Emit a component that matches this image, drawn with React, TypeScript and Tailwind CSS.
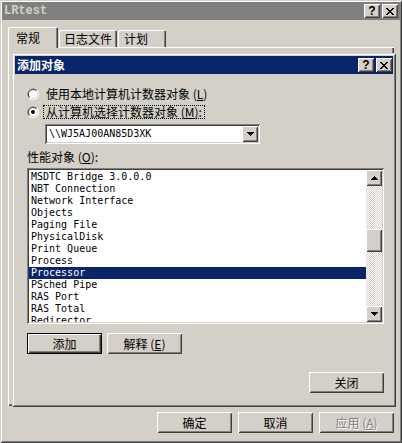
import React from 'react';

const cjk = "font-['Noto_Sans_CJK_SC','Noto_Sans',sans-serif]";
const mono = "font-['DejaVu_Sans_Mono',monospace]";
const raised = 'shadow-[inset_1px_1px_0_#fff,inset_-1px_-1px_0_#404040,inset_2px_2px_0_#d4d0c8,inset_-2px_-2px_0_#808080]';
const sunken = 'shadow-[inset_1px_1px_0_#808080,inset_-1px_-1px_0_#fff,inset_2px_2px_0_#404040,inset_-2px_-2px_0_#d4d0c8]';

const CloseGlyph = () => (
  <svg width="8" height="7" viewBox="0 0 8 7" shapeRendering="crispEdges">
    <path
      d="M0 0h2v1H0zM6 0h2v1H6zM1 1h2v1H1zM5 1h2v1H5zM2 2h4v1H2zM3 3h2v1H3zM2 4h4v1H2zM1 5h2v1H1zM5 5h2v1H5zM0 6h2v1H0zM6 6h2v1H6z"
      fill="#000"
    />
  </svg>
);

const Arrow = ({ up }: { up?: boolean }) => (
  <svg width="7" height="4" viewBox="0 0 7 4" shapeRendering="crispEdges">
    <path
      d={up ? 'M3 0h1v1H3zM2 1h3v1H2zM1 2h5v1H1zM0 3h7v1H0z' : 'M0 0h7v1H0zM1 1h5v1H1zM2 2h3v1H2zM3 3h1v1H3z'}
      fill="#000"
    />
  </svg>
);

const CaptionButtons = () => (
  <div className="ml-auto flex gap-[2px]">
    <div className={`w-[16px] h-[14px] bg-[#d4d0c8] ${raised} flex items-center justify-center`}>
      <span className="font-['Liberation_Sans',sans-serif] font-bold text-[12px] leading-none text-black">?</span>
    </div>
    <div className={`w-[16px] h-[14px] bg-[#d4d0c8] ${raised} flex items-center justify-center`}>
      <CloseGlyph />
    </div>
  </div>
);

const Radio = ({ checked }: { checked?: boolean }) => (
  <svg width="12" height="12" viewBox="0 0 12 12" className="shrink-0">
    <circle cx="6" cy="6" r="6" fill="#fff" />
    <path d="M1.76 10.24A6 6 0 0 1 10.24 1.76L6 6z" fill="#808080" />
    <circle cx="6" cy="6" r="5" fill="#d4d0c8" />
    <path d="M2.46 9.54A5 5 0 0 1 9.54 2.46L6 6z" fill="#404040" />
    <circle cx="6" cy="6" r="4" fill="#fff" />
    {checked && <circle cx="6" cy="6" r="2" fill="#000" />}
  </svg>
);

const Button = ({ children, isDefault, disabled }: { children: React.ReactNode; isDefault?: boolean; disabled?: boolean }) => (
  <div
    className={`w-[75px] h-[21px] bg-[#d4d0c8] flex items-center justify-center text-[12px] leading-none ${
      isDefault
        ? 'border border-black shadow-[inset_1px_1px_0_#fff,inset_-1px_-1px_0_#404040,inset_-2px_-2px_0_#808080]'
        : raised
    } ${disabled ? 'text-[#808080] [text-shadow:1px_1px_0_#fff]' : 'text-black'}`}
  >
    {children}
  </div>
);

const objects = [
  'MSDTC Bridge 3.0.0.0',
  'NBT Connection',
  'Network Interface',
  'Objects',
  'Paging File',
  'PhysicalDisk',
  'Print Queue',
  'Process',
  'Processor',
  'PSched Pipe',
  'RAS Port',
  'RAS Total',
  'Redirector',
];

export default function App() {
  return (
    <div
      className={`w-[402px] h-[443px] bg-[#d4d0c8] flex flex-col p-[2px] overflow-hidden ${cjk} text-[12px] text-black shadow-[inset_1px_1px_0_#d4d0c8,inset_-1px_-1px_0_#404040,inset_2px_2px_0_#fff,inset_-2px_-2px_0_#808080]`}
    >
      {/* outer caption */}
      <div className="h-[18px] bg-[#808080] flex items-center pl-[2px] pr-[2px] shrink-0">
        <span className="font-['Liberation_Mono',monospace] font-bold text-[12px] leading-none text-[#d4d0c8]">LRtest</span>
        <CaptionButtons />
      </div>

      {/* tabs */}
      <div className="mt-[7px] h-[20px] pl-[6px] flex items-start shrink-0">
        <div className="relative z-10 w-[50px] h-[21px] bg-[#d4d0c8] rounded-t-[2px] shadow-[inset_1px_1px_0_#fff,inset_-1px_0_0_#404040,inset_-2px_0_0_#808080] flex items-start pl-[8px] pt-[4px] leading-[14px]">
          常规
        </div>
        <div className="mt-[3px] ml-[1px] w-[58px] h-[17px] rounded-t-[2px] shadow-[inset_1px_1px_0_#fff,inset_-1px_0_0_#404040,inset_-2px_0_0_#808080] flex items-start justify-center pt-[2px] leading-[14px]">
          日志文件
        </div>
        <div className="mt-[3px] ml-[1px] w-[48px] h-[17px] rounded-t-[2px] shadow-[inset_1px_1px_0_#fff,inset_-1px_0_0_#404040,inset_-2px_0_0_#808080] flex items-start pl-[6px] pt-[2px] leading-[14px]">
          计划
        </div>
      </div>

      {/* tab panel */}
      <div className="relative ml-[6px] w-[386px] h-[359px] shrink-0 shadow-[inset_1px_1px_0_#fff,inset_-1px_-1px_0_#404040,inset_-2px_-2px_0_#808080]">
        {/* 添加对象 dialog window */}
        <div className="absolute left-[4px] top-[6px] w-[384px] h-[354px] bg-[#d4d0c8] p-[3px] flex flex-col shadow-[inset_1px_1px_0_#d4d0c8,inset_-1px_-1px_0_#404040,inset_2px_2px_0_#fff,inset_-2px_-2px_0_#808080]">
          <div className="h-[18px] bg-[#0a246a] flex items-center pl-[2px] pr-[1px] shrink-0">
            <span className="font-bold text-white text-[12px] leading-none">添加对象</span>
            <CaptionButtons />
          </div>

          <div className="flex-1 flex flex-col pl-[12px] pr-[9px]">
            <div className="mt-[11px] h-[18px] flex items-center">
              <Radio />
              <span className="ml-[4px] h-[14px] px-[2px] border border-transparent flex items-center leading-none">
                使用本地计算机计数器对象 (<span className="underline">L</span>)
              </span>
            </div>
            <div className="h-[18px] flex items-center">
              <Radio checked />
              <span className="ml-[4px] h-[14px] px-[2px] border border-dotted border-black flex items-center leading-none">
                从计算机选择计数器对象 (<span className="underline">M</span>):
              </span>
            </div>

            {/* machine combo */}
            <div className={`mt-[3px] ml-[18px] w-[215px] h-[20px] bg-white ${sunken} p-[2px] flex`}>
              <div className={`flex-1 pl-[2px] flex items-center ${mono} text-[10px] leading-none`}>
                {'\\\\WJ5AJ00AN85D3XK'}
              </div>
              <div className={`w-[16px] h-[16px] bg-[#d4d0c8] ${raised} flex items-center justify-center`}>
                <Arrow />
              </div>
            </div>

            <div className="mt-[5px] h-[16px] flex items-center leading-none">
              性能对象 (<span className="underline">O</span>):
            </div>

            {/* performance objects list */}
            <div className={`mt-[3px] h-[156px] bg-white ${sunken} p-[2px] flex`}>
              <div className={`flex-1 overflow-hidden pt-[1px] ${mono} text-[10px]`}>
                {objects.map((o) => (
                  <div
                    key={o}
                    className={`h-[12px] leading-[12px] pl-[2px] whitespace-pre ${
                      o === 'Processor' ? 'bg-[#0a246a] text-white' : 'text-black'
                    }`}
                  >
                    {o}
                  </div>
                ))}
              </div>
              <div className="w-[16px] flex flex-col">
                <div className={`h-[16px] bg-[#d4d0c8] ${raised} flex items-center justify-center`}>
                  <Arrow up />
                </div>
                <div className="flex-1 bg-[image:repeating-conic-gradient(#d4d0c8_0%_25%,#fff_0%_50%)] bg-[length:2px_2px]">
                  <div className={`mt-[43px] h-[23px] bg-[#d4d0c8] ${raised}`} />
                </div>
                <div className={`h-[16px] bg-[#d4d0c8] ${raised} flex items-center justify-center`}>
                  <Arrow />
                </div>
              </div>
            </div>

            <div className="mt-[9px] flex gap-[5px]">
              <Button isDefault>添加</Button>
              <Button>
                解释 (<span className="underline">E</span>)
              </Button>
            </div>

            <div className="mt-[18px] self-end">
              <Button>关闭</Button>
            </div>
          </div>
        </div>
      </div>

      {/* property sheet buttons */}
      <div className="mt-[6px] pr-[6px] flex justify-end gap-[6px] shrink-0">
        <Button>确定</Button>
        <Button>取消</Button>
        <Button disabled>
          应用 (<span className="underline">A</span>)
        </Button>
      </div>
    </div>
  );
}
